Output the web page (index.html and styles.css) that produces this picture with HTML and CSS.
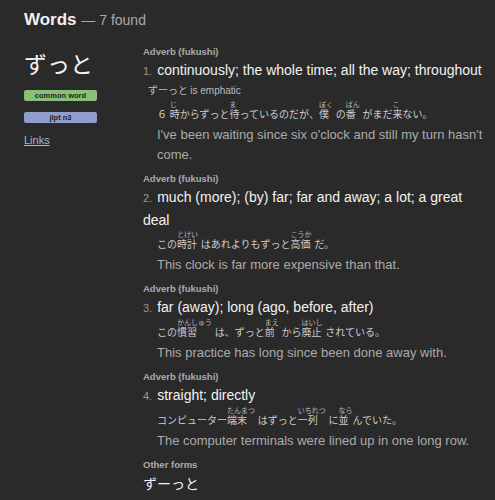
FILE: index.html
```html
<!DOCTYPE html>
<html>
<head>
<meta charset="utf-8">
<link rel="stylesheet" href="styles.css">
</head>
<body>
<h1 class="heading">Words <span class="count">— 7 found</span></h1>
<div class="entry">
  <div class="side">
    <div class="word">ずっと</div>
    <div class="tag tag-common">common word</div>
    <div class="tag tag-jlpt">jlpt n3</div>
    <a class="links" href="#">Links</a>
  </div>
  <div class="meanings">
    <div class="pos">Adverb (fukushi)</div>
    <div class="meaning"><span class="num">1.</span>continuously; the whole time; all the way; throughout</div>
    <div class="note">ずーっと <span class="note-en">is emphatic</span></div>
    <div class="sentence">
      <ul class="jp">
        <li class="w"><span class="fg"></span><span class="base">６</span></li> <li class="w"><span class="fg">じ</span><span class="base">時</span></li><li class="w"><span class="fg"></span><span class="base">からずっと</span></li><li class="w"><span class="fg">ま</span><span class="base">待</span></li><li class="w"><span class="fg"></span><span class="base">っているのだが、</span></li><li class="w"><span class="fg">ぼく</span><span class="base">僕</span></li> <li class="w"><span class="fg"></span><span class="base">の</span></li><li class="w"><span class="fg">ばん</span><span class="base">番</span></li> <li class="w"><span class="fg"></span><span class="base">がまだ</span></li><li class="w"><span class="fg">こ</span><span class="base">来</span></li><li class="w"><span class="fg"></span><span class="base">ない。</span></li>
      </ul>
      <p class="en">I've been waiting since six o'clock and still my turn hasn't come.</p>
    </div>

    <div class="pos">Adverb (fukushi)</div>
    <div class="meaning"><span class="num">2.</span>much (more); (by) far; far and away; a lot; a great deal</div>
    <div class="sentence">
      <ul class="jp">
        <li class="w"><span class="fg"></span><span class="base">この</span></li><li class="w"><span class="fg">とけい</span><span class="base">時計</span></li> <li class="w"><span class="fg"></span><span class="base">はあれよりもずっと</span></li><li class="w"><span class="fg">こうか</span><span class="base">高価</span></li> <li class="w"><span class="fg"></span><span class="base">だ。</span></li>
      </ul>
      <p class="en">This clock is far more expensive than that.</p>
    </div>

    <div class="pos">Adverb (fukushi)</div>
    <div class="meaning"><span class="num">3.</span>far (away); long (ago, before, after)</div>
    <div class="sentence">
      <ul class="jp">
        <li class="w"><span class="fg"></span><span class="base">この</span></li><li class="w"><span class="fg">かんしゅう</span><span class="base">慣習</span></li> <li class="w"><span class="fg"></span><span class="base">は、ずっと</span></li><li class="w"><span class="fg">まえ</span><span class="base">前</span></li> <li class="w"><span class="fg"></span><span class="base">から</span></li><li class="w"><span class="fg">はいし</span><span class="base">廃止</span></li> <li class="w"><span class="fg"></span><span class="base">されている。</span></li>
      </ul>
      <p class="en">This practice has long since been done away with.</p>
    </div>

    <div class="pos">Adverb (fukushi)</div>
    <div class="meaning"><span class="num">4.</span>straight; directly</div>
    <div class="sentence">
      <ul class="jp">
        <li class="w"><span class="fg"></span><span class="base">コンピューター</span></li><li class="w"><span class="fg">たんまつ</span><span class="base">端末</span></li> <li class="w"><span class="fg"></span><span class="base">はずっと</span></li><li class="w"><span class="fg">いちれつ</span><span class="base">一列</span></li> <li class="w"><span class="fg"></span><span class="base">に</span></li><li class="w"><span class="fg">なら</span><span class="base">並</span></li><li class="w"><span class="fg"></span><span class="base">んでいた。</span></li>
      </ul>
      <p class="en">The computer terminals were lined up in one long row.</p>
    </div>

    <div class="pos">Other forms</div>
    <div class="other">ずーっと</div>
  </div>
</div>
</body>
</html>
```

FILE: styles.css
```css
html, body {
  margin: 0;
  padding: 0;
  background: #2a2a2a;
  color: #e8e8e8;
  font-family: "Liberation Sans", Arial, "Noto Sans CJK JP", sans-serif;
}
body {
  padding: 9px 0 0 24px;
}
.heading {
  margin: 0;
  font-size: 17px;
  font-weight: bold;
  color: #f0f0f0;
  line-height: 22px;
}
.count {
  font-size: 14px;
  font-weight: normal;
  color: #aaaaaa;
}
.entry {
  display: flex;
  margin-top: 13px;
}
.side {
  width: 119px;
  flex: none;
  display: flex;
  flex-direction: column;
  align-items: flex-start;
}
.word {
  font-family: "Noto Sans CJK JP", sans-serif;
  font-size: 23px;
  line-height: 32px;
  color: #f2f2f2;
  margin-top: 3px;
}
.tag {
  width: 73px;
  height: 11px;
  box-sizing: border-box;
  border-radius: 2px;
  font-size: 7.5px;
  font-weight: bold;
  line-height: 11px;
  text-align: center;
  color: #222;
}
.tag-common {
  background: #8abf7a;
  margin-top: 11px;
}
.tag-jlpt {
  background: #8e9dc9;
  margin-top: 11px;
}
.links {
  margin-top: 10px;
  font-size: 11px;
  line-height: 14px;
  color: #a6bad2;
  text-decoration: underline;
}
.meanings {
  flex: 1;
  min-width: 0;
  padding-right: 6px;
}
.pos {
  font-size: 9.5px;
  font-weight: bold;
  color: #aaaaaa;
  line-height: 15px;
}
.meaning {
  font-size: 14px;
  line-height: 22px;
  color: #f2f2f2;
}
.num {
  font-size: 11px;
  color: #999999;
  margin-right: 5px;
}
.note {
  font-family: "Noto Sans CJK JP", sans-serif;
  font-size: 10px;
  color: #bbbbbb;
  line-height: 16px;
  padding-left: 5px;
  margin-bottom: 2px;
}
.note-en {
  font-family: "Liberation Sans", Arial, sans-serif;
}
.sentence {
  padding-left: 14px;
  margin-bottom: 6px;
}
.sentence + .pos {
  margin-top: 1px;
}
.jp {
  list-style: none;
  margin: 0;
  padding: 0;
  font-family: "Liberation Sans", Arial, "Noto Sans CJK JP", sans-serif;
  color: #cccccc;
  font-size: 10px;
  line-height: 19px;
}
.jp .w {
  display: inline-flex;
  flex-direction: column;
  align-items: flex-start;
  vertical-align: bottom;
}
.fg {
  font-family: "Noto Sans CJK JP", sans-serif;
  font-size: 7px;
  line-height: 6px;
  height: 6px;
  color: #bbbbbb;
}
.base {
  font-family: "Noto Sans CJK JP", sans-serif;
  font-size: 10px;
  line-height: 13px;
  white-space: nowrap;
}
.en {
  margin: 5px 0 0;
  font-size: 13px;
  line-height: 20px;
  color: #aaaaaa;
}
.other {
  font-family: "Noto Sans CJK JP", sans-serif;
  font-size: 14px;
  line-height: 22px;
  color: #f2f2f2;
}
```
